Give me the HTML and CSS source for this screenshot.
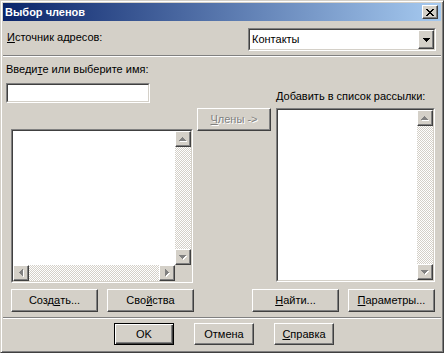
FILE: index.html
```html
<!DOCTYPE html>
<html lang="ru">
<head>
<meta charset="utf-8">
<title>Выбор членов</title>
<link rel="stylesheet" href="styles.css">
</head>
<body>
<div class="window">
  <div class="titlebar">
    <span class="title">Выбор членов</span>
    <div class="close raised">
      <svg width="8" height="7" viewBox="0 0 8 7" shape-rendering="crispEdges"><path fill="#000" d="M0 0h2v1H0zM6 0h2v1H6zM1 1h2v1H1zM5 1h2v1H5zM2 2h4v1H2zM3 3h2v1H3zM2 4h4v1H2zM1 5h2v1H1zM5 5h2v1H5zM0 6h2v1H0zM6 6h2v1H6z"/></svg>
    </div>
  </div>

  <div class="src-row">
    <span class="lbl src-lbl"><u>И</u>сточник адресов:</span>
    <div class="combo sunken">
      <div class="sunken-in combo-in">
        <span class="combo-text">Контакты</span>
        <div class="combo-btn raised">
          <svg width="7" height="4" viewBox="0 0 7 4" shape-rendering="crispEdges"><path fill="#000" d="M0 0h7v1h-1v1h-1v1h-1v1h-1v-1h-1v-1h-1v-1h-1z"/></svg>
        </div>
      </div>
    </div>
  </div>

  <div class="sep"></div>

  <div class="pick">
    <div class="col-left">
      <div class="lbl lbl-name">Введи<u>т</u>е или выберите имя:</div>
      <div class="input sunken"><div class="sunken-in white"></div></div>
      <div class="listbox lb-left sunken">
        <div class="sunken-in lb-grid">
          <div class="lb-content"></div>
          <div class="vscroll">
            <div class="sb-btn raised">
              <svg width="8" height="5" viewBox="0 0 8 5" shape-rendering="crispEdges"><path fill="#fff" transform="translate(1 1)" d="M3 0h1v1h1v1h1v1h1v1h-7v-1h1v-1h1v-1h1z"/><path fill="#808080" d="M3 0h1v1h1v1h1v1h1v1h-7v-1h1v-1h1v-1h1z"/></svg>
            </div>
            <div class="track"></div>
            <div class="sb-btn raised">
              <svg width="8" height="5" viewBox="0 0 8 5" shape-rendering="crispEdges"><path fill="#fff" transform="translate(1 1)" d="M0 0h7v1h-1v1h-1v1h-1v1h-1v-1h-1v-1h-1v-1h-1z"/><path fill="#808080" d="M0 0h7v1h-1v1h-1v1h-1v1h-1v-1h-1v-1h-1v-1h-1z"/></svg>
            </div>
          </div>
          <div class="hscroll">
            <div class="sb-btn raised">
              <svg width="5" height="8" viewBox="0 0 5 8" shape-rendering="crispEdges"><path fill="#fff" transform="translate(1 1)" d="M4 0v7h-1v-1h-1v-1h-1v-1h-1v-1h1v-1h1v-1h1v-1z"/><path fill="#808080" d="M4 0v7h-1v-1h-1v-1h-1v-1h-1v-1h1v-1h1v-1h1v-1z"/></svg>
            </div>
            <div class="track"></div>
            <div class="sb-btn raised">
              <svg width="5" height="8" viewBox="0 0 5 8" shape-rendering="crispEdges"><path fill="#fff" transform="translate(1 1)" d="M0 0h1v1h1v1h1v1h1v1h-1v1h-1v1h-1v1h-1z"/><path fill="#808080" d="M0 0h1v1h1v1h1v1h1v1h-1v1h-1v1h-1v1h-1z"/></svg>
            </div>
          </div>
          <div class="corner"></div>
        </div>
      </div>
    </div>

    <div class="col-mid">
      <div class="btn raised disabled btn-members"><span><u>Ч</u>лены -&gt;</span></div>
    </div>

    <div class="col-right">
      <div class="lbl lbl-add">Добавить в список рассылки:</div>
      <div class="listbox lb-right sunken">
        <div class="sunken-in lb-grid-r">
          <div class="lb-content"></div>
          <div class="vscroll">
            <div class="sb-btn raised">
              <svg width="8" height="5" viewBox="0 0 8 5" shape-rendering="crispEdges"><path fill="#fff" transform="translate(1 1)" d="M3 0h1v1h1v1h1v1h1v1h-7v-1h1v-1h1v-1h1z"/><path fill="#808080" d="M3 0h1v1h1v1h1v1h1v1h-7v-1h1v-1h1v-1h1z"/></svg>
            </div>
            <div class="track"></div>
            <div class="sb-btn raised">
              <svg width="8" height="5" viewBox="0 0 8 5" shape-rendering="crispEdges"><path fill="#fff" transform="translate(1 1)" d="M0 0h7v1h-1v1h-1v1h-1v1h-1v-1h-1v-1h-1v-1h-1z"/><path fill="#808080" d="M0 0h7v1h-1v1h-1v1h-1v1h-1v-1h-1v-1h-1v-1h-1z"/></svg>
            </div>
          </div>
        </div>
      </div>
    </div>
  </div>

  <div class="btn-row">
    <div class="btn-group">
      <div class="btn raised btn-wide">Созд<u>а</u>ть...</div>
      <div class="btn raised btn-wide">Сво<u>й</u>ства</div>
    </div>
    <div class="btn-group">
      <div class="btn raised btn-wide"><u>Н</u>айти...</div>
      <div class="btn raised btn-wide"><u>П</u>араметры...</div>
    </div>
  </div>

  <div class="sep sep-bottom"></div>

  <div class="dlg-buttons">
    <div class="btn btn-default btn-small">OK</div>
    <div class="btn raised btn-small">Отмена</div>
    <div class="btn raised btn-small"><u>С</u>правка</div>
  </div>
</div>
</body>
</html>
```

FILE: styles.css
```css
* {
  box-sizing: border-box;
}

html, body {
  margin: 0;
  padding: 0;
  background: #d4d0c8;
}

body {
  font-family: "Liberation Sans", Arial, sans-serif;
  font-size: 11px;
  line-height: 13px;
  color: #000;
}

u {
  text-decoration: underline;
  text-underline-offset: 1px;
}

.window {
  width: 444px;
  height: 353px;
  background: #d4d0c8;
  border: 1px solid;
  border-color: #d4d0c8 #404040 #404040 #d4d0c8;
  box-shadow: inset 1px 1px #fff, inset -1px -1px #808080;
  padding: 2px;
  display: flex;
  flex-direction: column;
}

/* bevels */
.raised {
  background: #d4d0c8;
  border: 1px solid;
  border-color: #fff #404040 #404040 #fff;
  box-shadow: inset -1px -1px #808080;
}

.sunken {
  border: 1px solid;
  border-color: #808080 #fff #fff #808080;
}

.sunken-in {
  width: 100%;
  height: 100%;
  border: 1px solid;
  border-color: #404040 #d4d0c8 #d4d0c8 #404040;
  background: #fff;
}

.white {
  background: #fff;
}

/* title bar */
.titlebar {
  height: 18px;
  flex: none;
  background: linear-gradient(to right, #0a246a, #a6caf0);
  display: flex;
  align-items: center;
  justify-content: space-between;
  padding: 0 3px 0 2px;
}

.title {
  color: #fff;
  font-weight: bold;
  line-height: 18px;
}

.close {
  width: 16px;
  height: 14px;
  display: flex;
  align-items: center;
  justify-content: center;
}

.close svg {
  display: block;
  margin-left: -1px;
}

/* source row */
.src-row {
  height: 34px;
  flex: none;
  display: flex;
  justify-content: space-between;
  align-items: flex-start;
  padding: 0 5px 0 4px;
}

.src-lbl {
  margin-top: 10px;
}

.combo {
  margin-top: 7px;
  width: 188px;
  height: 23px;
}

.combo-in {
  display: flex;
  align-items: stretch;
  justify-content: space-between;
}

.combo-text {
  padding-left: 2px;
  align-self: center;
}

.combo-btn {
  width: 16px;
  display: flex;
  align-items: center;
  justify-content: center;
}

.combo-btn svg {
  display: block;
}

.sep {
  height: 2px;
  flex: none;
  border-top: 1px solid #808080;
  border-bottom: 1px solid #fff;
}

/* pick area */
.pick {
  display: flex;
  align-items: flex-start;
  flex: none;
}

.col-left {
  margin-left: 3px;
  width: 187px;
  display: flex;
  flex-direction: column;
}

.lbl-name {
  margin-top: 6px;
}

.input {
  margin-top: 7px;
  width: 144px;
  height: 20px;
}

.listbox.lb-left {
  margin-top: 26px;
  margin-left: 5px;
  width: 182px;
  height: 154px;
}

.lb-grid {
  display: grid;
  grid-template-columns: 1fr 16px;
  grid-template-rows: 1fr 16px;
}

.lb-grid-r {
  display: grid;
  grid-template-columns: 1fr 16px;
}

.lb-content {
  background: #fff;
}

.vscroll {
  display: flex;
  flex-direction: column;
}

.hscroll {
  display: flex;
}

.sb-btn {
  width: 16px;
  height: 16px;
  flex: none;
  display: flex;
  align-items: center;
  justify-content: center;
}

.sb-btn svg {
  display: block;
}

.track {
  flex: 1;
  background-color: #fff;
  background-image: repeating-conic-gradient(#d4d0c8 0 25%, #fff 0 50%);
  background-size: 2px 2px;
}

.corner {
  background: #d4d0c8;
}

.col-mid {
  margin-left: 4px;
  width: 74px;
}

.btn {
  display: flex;
  align-items: center;
  justify-content: center;
  white-space: nowrap;
}

.btn-members {
  margin-top: 51px;
  width: 74px;
  height: 23px;
}

.disabled {
  color: #808080;
  text-shadow: 1px 1px 0 #fff;
}

.col-right {
  margin-left: 5px;
  width: 159px;
  display: flex;
  flex-direction: column;
}

.lbl-add {
  margin-top: 33px;
}

.listbox.lb-right {
  margin-top: 5px;
  height: 174px;
}

/* buttons row */
.btn-row {
  margin-top: 6px;
  display: flex;
  justify-content: space-between;
  padding: 0 6px 0 8px;
  flex: none;
}

.btn-group {
  display: flex;
  gap: 9px;
}

.btn-wide {
  width: 87px;
  height: 23px;
}

.sep-bottom {
  margin-top: 5px;
}

.dlg-buttons {
  margin-top: 4px;
  display: flex;
  gap: 20px;
  padding-left: 111px;
  flex: none;
}

.btn-small {
  width: 60px;
  height: 22px;
}

.btn-default {
  border: 1px solid #000;
  box-shadow: inset 1px 1px #fff, inset -1px -1px #404040, inset -2px -2px #808080;
}
```
